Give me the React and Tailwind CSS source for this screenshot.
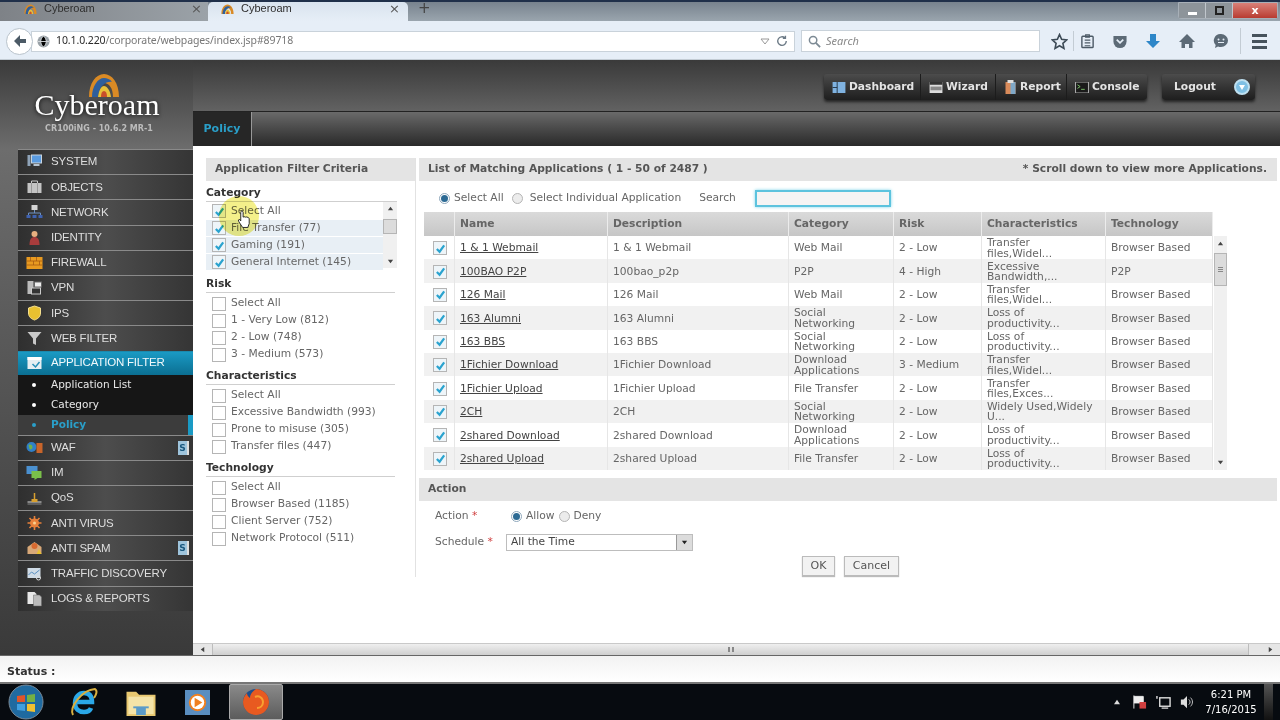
import React from "react";

const UI = "font-['DejaVu_Sans',sans-serif]";
const ARIAL = "font-['Liberation_Sans',Arial,sans-serif]";

function Arch({ className }) {
  return (
    <svg viewBox="0 0 32 24" className={className}>
      <path d="M1 24C1 10 8 1 16 1s15 9 15 23h-6C25 15 21 10 16 10S7 15 7 24Z" fill="#d98a25" />
      <path d="M4 24C4 13 10 5 16 5c3 0 6 1 8 4-5-1-13 3-14 15Z" fill="#2f5f9c" />
      <path d="M10 24c1-7 3-11 6-11s6 4 7 11Z" fill="#e8c23a" />
      <path d="M13 24c0-4 1-6 3-6s3 2 3 6Z" fill="#c9502a" />
    </svg>
  );
}

const navIcons = {
  system: <g><rect x="1" y="1" width="3" height="11" fill="#8fa3b8" /><rect x="5" y="1" width="10" height="8" fill="#5a9be0" stroke="#c8d4e0" /><rect x="7" y="10" width="6" height="2" fill="#b8c4d0" /></g>,
  objects: <g><rect x="1" y="4" width="14" height="10" fill="#c4c4c4" /><path d="M5 4V2h6v2" stroke="#ccc" fill="none" /><path d="M5 4v10M11 4v10" stroke="#999" /></g>,
  network: <g><rect x="5" y="1" width="6" height="5" fill="#d4d4d4" /><path d="M8 6v3M2 12V9h12v3" stroke="#6d8fc0" fill="none" /><rect x="0" y="11" width="4" height="3" fill="#3f62b0" /><rect x="6" y="11" width="4" height="3" fill="#3f62b0" /><rect x="12" y="11" width="4" height="3" fill="#3f62b0" /></g>,
  identity: <g><circle cx="8" cy="4" r="3" fill="#e8b080" /><path d="M3 15c0-6 2-8 5-8s5 2 5 8Z" fill="#a83c3c" /></g>,
  firewall: <g><rect x="0" y="2" width="16" height="12" fill="#e89a20" /><path d="M0 6h16M0 10h16M4 2v4M10 2v4M7 6v4M13 6v4" stroke="#a85c10" strokeWidth=".8" /></g>,
  vpn: <g><rect x="1" y="1" width="6" height="13" fill="#bbb" /><rect x="8" y="2" width="7" height="5" fill="#eee" stroke="#666" /><rect x="5" y="8" width="9" height="6" fill="#333" stroke="#ccc" /></g>,
  ips: <path d="M8 1l6 2v5c0 4-3 6-6 7-3-1-6-3-6-7V3Z" fill="#e8c030" stroke="#f5e090" />,
  web: <path d="M1 2h14L9.5 8.5V15l-3-1.5v-5Z" fill="#c8c8c8" />,
  app: <g><rect x="1" y="2" width="14" height="12" fill="#e6eef2" /><rect x="1" y="2" width="14" height="3" fill="#fff" /><path d="M6 9l3 3 4-5" stroke="#2a8fb8" strokeWidth="1.5" fill="none" /></g>,
  waf: <g><circle cx="5" cy="7" r="5" fill="#2f7fc8" /><path d="M2 5c2-1 4 0 4 2s-2 3-3 2" fill="#6db04a" /><rect x="10" y="3" width="6" height="10" fill="#c8642a" /></g>,
  im: <g><rect x="0" y="1" width="11" height="8" fill="#4a90d0" /><rect x="5" y="6" width="10" height="7" fill="#7ac04a" /><path d="M8 13v2l3-2" fill="#7ac04a" /></g>,
  qos: <g><path d="M1 12h14" stroke="#ddd" strokeWidth="1" /><rect x="5" y="9" width="6" height="3" fill="#d8a030" /><path d="M8 3v6" stroke="#d8a030" strokeWidth="1.5" /><path d="M1 14h14" stroke="#888" /></g>,
  av: <g><circle cx="8" cy="8" r="4.5" fill="#e8803a" /><path d="M8 1v14M1 8h14M3 3l10 10M13 3L3 13" stroke="#e8803a" strokeWidth="1.6" /><circle cx="8" cy="8" r="1.5" fill="#f8d090" /></g>,
  as: <g><path d="M1 7l7-5 7 5v7H1Z" fill="#d8a878" /><circle cx="8" cy="6" r="3" fill="#d86a30" /><path d="M10 14l2.5-5 2.5 5Z" fill="#e8c030" /></g>,
  td: <g><rect x="1" y="2" width="13" height="10" fill="#cfdbe6" /><path d="M2 9l3-3 3 2 5-4" stroke="#5a8fc0" fill="none" /><circle cx="12" cy="12" r="2" fill="none" stroke="#ddd" /></g>,
  logs: <g><path d="M1 1h7l2 2v10H1Z" fill="#e8e8e8" /><path d="M7 4h6l2 2v9H7Z" fill="#bbb" stroke="#666" strokeWidth=".5" /></g>,
};

function NavItem({ icon, label, active, badge, h = "h-[25.2px]" }) {
  return (
    <div className={`${h} flex items-center border-t ${active ? "border-[#1b89ad] bg-gradient-to-b from-[#1a9ac4] to-[#0b6f92]" : "border-[#8a8a8a] bg-gradient-to-r from-[#2f2f2f] via-[#4d4d4d] to-[#353535]"} pl-[8px] pr-[4px]`}>
      <svg viewBox="0 0 16 16" className="w-[17px] h-[16px] shrink-0">{navIcons[icon]}</svg>
      <span className={`ml-[8px] flex-1 text-[11.5px] tracking-[-0.2px] ${ARIAL} ${active ? "text-[#f0f8fb]" : "text-[#dedede]"}`}>{label}</span>
      {badge && <span className="w-[11px] h-[14px] bg-[#9ec4dc] text-[#1c5a80] border-r-2 border-[#ddd] text-[9px] leading-[14px] font-bold text-center">S</span>}
    </div>
  );
}

function SubItem({ label, active }) {
  return (
    <div className={`h-[20px] flex items-center pl-[14px] text-[10.5px] ${UI} ${active ? "bg-[#3c3c3c] border-r-[5px] border-[#1a9ac4] text-[#2a9fc9] font-bold" : "text-[#e8e8e8]"}`}>
      <span className={`w-[4px] h-[4px] rounded-full mr-[15px] ${active ? "bg-[#2a9fc9]" : "bg-white"}`} />
      {label}
    </div>
  );
}

function Check({ on }) {
  return (
    <span className={`w-[14px] h-[14px] shrink-0 border border-[#b5b5b5] flex items-center justify-center ${on ? "bg-[#eef5f9]" : "bg-white"}`}>
      {on && (
        <svg viewBox="0 0 12 12" className="w-[11px] h-[11px]"><path d="M2 6.5l3 3 5-7" stroke="#2aa3cf" strokeWidth="2.4" fill="none" /></svg>
      )}
    </span>
  );
}

function Radio({ on }) {
  return (
    <span className={`w-[11px] h-[11px] rounded-full border shrink-0 flex items-center justify-center ${on ? "border-[#8fa8bc] bg-white" : "border-[#b5b5b5] bg-[#ececec]"}`}>
      {on && <span className="w-[7px] h-[7px] rounded-full bg-[#2c6a94]" />}
    </span>
  );
}

function FilterGroup({ title, items }) {
  return (
    <div>
      <div className={`h-[17px] text-[10.7px] font-bold text-[#333] leading-[17px] ${UI}`}>{title}</div>
      <div className="border-t border-[#cfcfcf] w-[189px] pt-[2px] mb-[4px]">
        {items.map((t) => (
          <div key={t} className="h-[17px] flex items-center pl-[6px]">
            <Check />
            <span className={`ml-[5px] text-[10.7px] text-[#666] ${UI}`}>{t}</span>
          </div>
        ))}
      </div>
    </div>
  );
}

const rows = [
  ["1 & 1 Webmail", "1 & 1 Webmail", "Web Mail", "2 - Low", "Transfer files,Widel...", "Browser Based"],
  ["100BAO P2P", "100bao_p2p", "P2P", "4 - High", "Excessive Bandwidth,...", "P2P"],
  ["126 Mail", "126 Mail", "Web Mail", "2 - Low", "Transfer files,Widel...", "Browser Based"],
  ["163 Alumni", "163 Alumni", "Social Networking", "2 - Low", "Loss of productivity...", "Browser Based"],
  ["163 BBS", "163 BBS", "Social Networking", "2 - Low", "Loss of productivity...", "Browser Based"],
  ["1Fichier Download", "1Fichier Download", "Download Applications", "3 - Medium", "Transfer files,Widel...", "Browser Based"],
  ["1Fichier Upload", "1Fichier Upload", "File Transfer", "2 - Low", "Transfer files,Exces...", "Browser Based"],
  ["2CH", "2CH", "Social Networking", "2 - Low", "Widely Used,Widely U...", "Browser Based"],
  ["2shared Download", "2shared Download", "Download Applications", "2 - Low", "Loss of productivity...", "Browser Based"],
  ["2shared Upload", "2shared Upload", "File Transfer", "2 - Low", "Loss of productivity...", "Browser Based"],
];

const colW = ["w-[31px]", "w-[153px]", "w-[181px]", "w-[105px]", "w-[88px]", "w-[124px]", "w-[107px]"];

function ToolBtn({ icon, label, w, last }) {
  return (
    <div className={`${w} h-full flex items-center gap-[3px] pl-[8px] ${last ? "" : "border-r border-[#1c1c1c]"}`}>
      {icon}
      <span className={`text-[10.7px] font-bold text-[#e4e4e4] ${UI}`}>{label}</span>
    </div>
  );
}

function ScrollArrow({ d }) {
  return <svg viewBox="0 0 8 8" className="w-[7px] h-[7px]"><path d={d} fill="#444" /></svg>;
}

export default function App() {
  return (
    <div className={`relative w-[1280px] h-[720px] overflow-hidden flex flex-col bg-white ${UI}`}>
      {/* tab strip */}
      <div className="h-[21px] shrink-0 flex items-end bg-gradient-to-b from-[#78838e] to-[#9aa5ae] border-t-2 border-[#20304a] relative">
        <div className="w-[208px] h-[19px] bg-gradient-to-r from-[#7e8287] to-[#9ba2a8] flex items-center pl-[24px] pb-[6px]">
          <Arch className="w-[13px] h-[10px]" />
          <span className={`ml-[7px] text-[11px] text-[#2e2e2e] ${ARIAL}`}>Cyberoam</span>
          <span className="ml-auto mr-[6px] text-[13px] leading-none text-[#555]">×</span>
        </div>
        <div className="w-[200px] h-[19px] bg-gradient-to-b from-[#d9e3ee] to-[#e6eef7] rounded-t-[5px] flex items-center pl-[13px] pb-[6px]">
          <Arch className="w-[13px] h-[10px]" />
          <span className={`ml-[7px] text-[11px] text-[#2e2e2e] ${ARIAL}`}>Cyberoam</span>
          <span className="ml-auto mr-[8px] text-[13px] leading-none text-[#555]">×</span>
        </div>
        <span className="ml-[10px] h-[19px] text-[15px] leading-[13px] text-[#444]">+</span>
        <div className="ml-auto flex h-[17px] w-[100px] mr-[2px] self-start border border-[#a8b0b8] rounded-b-[3px]">
          <div className="flex-1 bg-[#8d949a] border-r border-[#c0c6cc] flex items-end justify-center pb-[3px]"><span className="w-[9px] h-[3px] bg-white" /></div>
          <div className="flex-1 bg-[#8d949a] border-r border-[#c0c6cc] flex items-center justify-center"><span className="w-[9px] h-[9px] border-2 border-[#222]" /></div>
          <div className="w-[44px] bg-gradient-to-b from-[#d88078] to-[#b83a30] text-white font-bold text-[11px] leading-[15px] text-center">x</div>
        </div>
      </div>
      {/* toolbar */}
      <div className="h-[39px] shrink-0 flex items-center bg-[#e6eef7] border-b border-[#c3ccd4] pl-[6px] pt-[2px]">
        <div className="w-[27px] h-[27px] rounded-full bg-white border border-[#b9c3cc] flex items-center justify-center z-10">
          <svg viewBox="0 0 16 16" className="w-[16px] h-[16px]"><path d="M8 2L2 8l6 6V10h6V6H8Z" fill="#4c5a66" /></svg>
        </div>
        <div className="-ml-[2px] w-[764px] h-[21px] bg-white border border-[#c9d2da] flex items-center pl-[5px] pr-[6px]">
          <svg viewBox="0 0 14 14" className="w-[13px] h-[13px]"><circle cx="7" cy="7" r="6.5" fill="#9aa2a8" /><path d="M1 7h12M7 1c-4 4-4 8 0 12M7 1c4 4 4 8 0 12" stroke="#d5d9dc" /></svg>
          <span className="ml-[6px] text-[10.5px] tracking-[-0.1px] text-[#2b2b2b] font-['Noto_Sans',sans-serif]">10.1.0.220<span className="text-[#777]">/corporate/webpages/index.jsp#89718</span></span>
          <svg viewBox="0 0 10 10" className="ml-auto w-[10px] h-[10px]"><path d="M1 3h8L5 8Z" fill="none" stroke="#999" /></svg>
          <svg viewBox="0 0 14 14" className="ml-[6px] w-[12px] h-[12px]"><path d="M12 7a5 5 0 1 1-1.5-3.5M11 1v3H8" stroke="#6c7a86" strokeWidth="1.6" fill="none" /></svg>
        </div>
        <div className="ml-[6px] w-[239px] h-[22px] bg-white border border-[#c9d2da] flex items-center pl-[6px]">
          <svg viewBox="0 0 14 14" className="w-[13px] h-[13px]"><circle cx="5.5" cy="5.5" r="4" stroke="#7d8a94" strokeWidth="1.6" fill="none" /><path d="M8.5 8.5L13 13" stroke="#7d8a94" strokeWidth="2" /></svg>
          <span className="ml-[5px] text-[11px] italic text-[#888] font-['Noto_Sans',sans-serif]">Search</span>
        </div>
        <svg viewBox="0 0 16 16" className="ml-[11px] w-[17px] h-[17px]"><path d="M8 1.5l2 4.5 4.8.5-3.6 3.2 1 4.8L8 12l-4.200 2.500 1-4.800L1.200 6.500 6 6Z" fill="none" stroke="#3c4a56" strokeWidth="1.500" /></svg>
        <span className="w-px h-[20px] bg-[#c3ccd4] ml-[5px]" />
        <svg viewBox="0 0 16 16" className="ml-[6px] w-[15px] h-[16px]"><rect x="2" y="3" width="12" height="12" rx="1" fill="none" stroke="#4c5a66" strokeWidth="1.500" /><path d="M6 1.500h4V4H6ZM5 7h6M5 10h6M5 13h6" stroke="#4c5a66" strokeWidth="1.200" fill="none" /></svg>
        <svg viewBox="0 0 16 16" className="ml-[17px] w-[16px] h-[15px]"><path d="M1 2h14v6a7 7 0 0 1-14 0Z" fill="#5c6a76" /><path d="M4.500 6L8 9.500 11.500 6" stroke="#e6eef7" strokeWidth="1.800" fill="none" /></svg>
        <svg viewBox="0 0 16 16" className="ml-[17px] w-[16px] h-[16px]"><path d="M5 1h6v7h4l-7 7-7-7h4Z" fill="#2d86c8" /></svg>
        <svg viewBox="0 0 16 16" className="ml-[18px] w-[16px] h-[16px]"><path d="M8 1L0 9h2.500v6H6v-4h4v4h3.500V9H16Z" fill="#5c6a76" /></svg>
        <svg viewBox="0 0 16 16" className="ml-[18px] w-[16px] h-[16px]"><path d="M8 1a7 6.500 0 0 1 0 13c-1 0-2-.2-3-.6L2 15l.7-3A6.500 6.500 0 0 1 8 1Z" fill="#5c6a76" /><circle cx="5.500" cy="6.500" r="1" fill="#e6eef7" /><circle cx="10.500" cy="6.500" r="1" fill="#e6eef7" /><path d="M5 9.500h6" stroke="#e6eef7" /></svg>
        <span className="w-px h-[26px] bg-[#c3ccd4] ml-[11px]" />
        <div className="ml-[11px] w-[15px] flex flex-col gap-[3px]">
          <span className="h-[3px] bg-[#46525c]" />
          <span className="h-[3px] bg-[#46525c]" />
          <span className="h-[3px] bg-[#46525c]" />
        </div>
      </div>

      {/* app */}
      <div className="h-[595px] shrink-0 flex">
        {/* left column */}
        <div className="w-[193px] shrink-0 flex flex-col bg-gradient-to-b from-[#3b3b3b] via-[#6d6d6d] via-[15%] to-[#3a3a3a]">
          <div className="h-[89px] shrink-0 flex flex-col items-center pl-[1px]">
            <Arch className="w-[32px] h-[24px] mt-[13px] ml-[14px]" />
            <span className="-mt-[7px] text-[30px] leading-[30px] text-white font-['Liberation_Serif',serif] drop-shadow-[0_1px_2px_rgba(0,0,0,0.8)]">Cyberoam</span>
            <span className={`mt-[3px] ml-[4px] text-[8px] font-bold text-[#bcbcbc] ${UI}`}>CR100iNG - 10.6.2 MR-1</span>
          </div>
          <div className="ml-[18px] flex flex-col">
            <NavItem icon="system" label="SYSTEM" />
            <NavItem icon="objects" label="OBJECTS" />
            <NavItem icon="network" label="NETWORK" />
            <NavItem icon="identity" label="IDENTITY" />
            <NavItem icon="firewall" label="FIREWALL" />
            <NavItem icon="vpn" label="VPN" />
            <NavItem icon="ips" label="IPS" />
            <NavItem icon="web" label="WEB FILTER" />
            <NavItem icon="app" label="APPLICATION FILTER" active h="h-[24px]" />
            <div className="bg-[#161616] flex flex-col">
              <SubItem label="Application List" />
              <SubItem label="Category" />
              <SubItem label="Policy" active />
            </div>
            <NavItem icon="waf" label="WAF" badge />
            <NavItem icon="im" label="IM" />
            <NavItem icon="qos" label="QoS" />
            <NavItem icon="av" label="ANTI VIRUS" />
            <NavItem icon="as" label="ANTI SPAM" badge />
            <NavItem icon="td" label="TRAFFIC DISCOVERY" />
            <NavItem icon="logs" label="LOGS & REPORTS" />
          </div>
        </div>

        {/* right column */}
        <div className="flex-1 min-w-0 flex flex-col">
          <div className="h-[51px] shrink-0 bg-gradient-to-b from-[#3a3a3a] to-[#626262] flex items-start justify-end pt-[14px] pr-[25px]">
            <div className="h-[26px] flex items-center rounded-[3px] bg-gradient-to-b from-[#4c4c4c] to-[#1e1e1e] shadow-[0_2px_3px_rgba(0,0,0,0.6)]">
              <ToolBtn w="w-[97px]" label="Dashboard" icon={<svg viewBox="0 0 14 12" className="w-[14px] h-[11px]"><rect width="14" height="12" fill="#7fb2e0" /><path d="M5 0v12M0 6h5" stroke="#234" /></svg>} />
              <ToolBtn w="w-[75px]" label="Wizard" icon={<svg viewBox="0 0 14 12" className="w-[14px] h-[11px]"><rect width="14" height="12" fill="#ddd" /><rect y="0" width="14" height="3" fill="#333" /><rect x="1" y="5" width="12" height="4" fill="#888" /></svg>} />
              <ToolBtn w="w-[71px]" label="Report" icon={<svg viewBox="0 0 12 14" className="w-[13px] h-[14px]"><rect x="1" y="2" width="10" height="12" fill="#d88a5a" /><rect x="6" y="2" width="5" height="12" fill="#7fa8c8" /><path d="M3 0h6v3H3Z" fill="#ddd" /></svg>} />
              <ToolBtn w="w-[80px]" label="Console" last icon={<svg viewBox="0 0 14 12" className="w-[14px] h-[11px]"><rect width="14" height="12" fill="#1a1a1a" stroke="#bbb" /><path d="M2 3l3 2-3 2M6 8h4" stroke="#7ec86a" fill="none" /></svg>} />
            </div>
            <div className="ml-[15px] w-[93px] h-[26px] flex items-center rounded-[3px] bg-gradient-to-b from-[#4c4c4c] to-[#1e1e1e] shadow-[0_2px_3px_rgba(0,0,0,0.6)]">
              <span className={`w-[66px] text-center text-[10.7px] font-bold text-[#e4e4e4] ${UI}`}>Logout</span>
              <span className="ml-auto mr-[5px] w-[16px] h-[16px] rounded-full bg-[#7fc0e4] border-2 border-[#bfe0f0] flex items-center justify-center">
                <svg viewBox="0 0 8 8" className="w-[8px] h-[8px]"><path d="M1 2h6L4 7Z" fill="#fff" /></svg>
              </span>
            </div>
          </div>
          <div className="h-[35px] shrink-0 flex bg-gradient-to-b from-[#6a6a6a] to-[#2a2a2a] border-t border-[#222]">
            <div className="w-[59px] bg-[#262626] border-r border-[#999] flex items-center justify-center">
              <span className={`text-[11px] font-bold text-[#2a9fc9] ${UI}`}>Policy</span>
            </div>
          </div>

          {/* content */}
          <div className="h-[497px] shrink-0 bg-white flex pt-[12px] pl-[13px]">
            {/* filters */}
            <div className="w-[209px] h-[419px] shrink-0 border-r border-[#e2e2e2] box-content">
              <div className={`h-[23px] bg-[#e4e4e4] flex items-center pl-[9px] text-[10.7px] font-bold text-[#555] ${UI}`}>Application Filter Criteria</div>
              <div className="pt-[3px]">
                <div className={`h-[17px] text-[10.7px] font-bold text-[#333] leading-[17px] ${UI}`}>Category</div>
                <div className="border-t border-[#cfcfcf] w-[191px] h-[67px] flex mb-[7px] relative">
                  <div className="flex-1 flex flex-col pt-[1px]">
                    {[["Select All", false], ["File Transfer (77)", true], ["Gaming (191)", true], ["General Internet (145)", true]].map(([t, shade]) => (
                      <div key={t} className={`h-[16px] mb-[1px] flex items-center pl-[6px] ${shade ? "bg-[#e8eff5]" : ""}`}>
                        <Check on />
                        <span className={`ml-[5px] text-[10.7px] text-[#666] ${UI}`}>{t}</span>
                      </div>
                    ))}
                  </div>
                  <div className="w-[14px] bg-[#f0f0f0] flex flex-col items-center justify-between py-[3px] relative">
                    <ScrollArrow d="M4 2l3 4H1Z" />
                    <div className="absolute top-[17px] w-[14px] h-[15px] bg-[#dcdcdc] border border-[#b5b5b5]" />
                    <ScrollArrow d="M4 6L1 2h6Z" />
                  </div>
                </div>
                <FilterGroup title="Risk" items={["Select All", "1 - Very Low (812)", "2 - Low (748)", "3 - Medium (573)"]} />
                <FilterGroup title="Characteristics" items={["Select All", "Excessive Bandwidth (993)", "Prone to misuse (305)", "Transfer files (447)"]} />
                <FilterGroup title="Technology" items={["Select All", "Browser Based (1185)", "Client Server (752)", "Network Protocol (511)"]} />
              </div>
            </div>

            {/* apps */}
            <div className="ml-[3px] w-[858px] shrink-0 flex flex-col">
              <div className={`h-[23px] bg-[#e4e4e4] flex items-center justify-between pl-[9px] pr-[10px] text-[10.7px] font-bold text-[#555] ${UI}`}>
                <span>List of Matching Applications ( 1 - 50 of 2487 )</span>
                <span>* Scroll down to view more Applications.</span>
              </div>
              <div className={`h-[31px] pt-[4px] flex items-center pl-[20px] text-[10.7px] text-[#666] ${UI}`}>
                <Radio on />
                <span className="ml-[4px]">Select All</span>
                <span className="ml-[8px]"><Radio /></span>
                <span className="ml-[7px]">Select Individual Application</span>
                <span className="ml-[18px]">Search</span>
                <span className="ml-[19px] w-[136px] h-[17px] border-2 border-[#5cc3de] bg-[#f4f4f4] shadow-[0_0_3px_#7fd6ea]" />
              </div>
              {/* table head */}
              <div className="ml-[5px] w-[789px] h-[24px] flex bg-gradient-to-b from-[#dadada] to-[#c6c6c6]">
                {["", "Name", "Description", "Category", "Risk", "Characteristics", "Technology"].map((h, i) => (
                  <div key={h} className={`${colW[i]} shrink-0 h-full flex items-center pl-[5px] border-r border-[#ececec] text-[10.7px] font-bold text-[#666] ${UI}`}>{h}</div>
                ))}
              </div>
              <div className="flex">
                <div className="ml-[5px] w-[789px] shrink-0 flex flex-col">
                  {rows.map((r, idx) => (
                    <div key={r[0]} className={`h-[23.4px] flex items-center ${idx % 2 ? "bg-[#f1f1f1]" : "bg-white"}`}>
                      <div className={`${colW[0]} shrink-0 h-full border-r border-[#e6e6e6] flex items-center justify-center pt-[1px] pl-[2px]`}>
                        <Check on />
                      </div>
                      {r.map((c, i) => (
                        <div key={i} className={`${colW[i + 1]} shrink-0 h-full flex items-center pt-[2px] pl-[5px] ${i === 4 ? "pr-[10px]" : "pr-[6px]"} border-r border-[#e6e6e6] text-[10.7px] leading-[10.500px] text-[#666] ${UI}`}>
                          <span className={i === 0 ? "underline text-[#444]" : ""}>{c}</span>
                        </div>
                      ))}
                    </div>
                  ))}
                </div>
                <div className="w-[13px] ml-[1px] bg-[#f0f0f0] flex flex-col items-center justify-between py-[4px] relative">
                  <ScrollArrow d="M4 2l3 4H1Z" />
                  <div className="absolute top-[17px] w-[13px] h-[33px] bg-[#dcdcdc] border border-[#b5b5b5] flex flex-col items-center justify-center gap-[1px]">
                    <span className="w-[5px] h-px bg-[#888]" />
                    <span className="w-[5px] h-px bg-[#888]" />
                    <span className="w-[5px] h-px bg-[#888]" />
                  </div>
                  <ScrollArrow d="M4 6L1 2h6Z" />
                </div>
              </div>
              {/* action */}
              <div className={`mt-[8px] h-[23px] bg-[#e4e4e4] flex items-center pl-[9px] text-[10.7px] font-bold text-[#555] ${UI}`}>Action</div>
              <div className={`h-[31px] flex items-center pl-[16px] text-[10.7px] text-[#666] ${UI}`}>
                <span className="w-[76px]">Action <span className="text-[#d04040]">*</span></span>
                <Radio on />
                <span className="ml-[4px]">Allow</span>
                <span className="ml-[4px]"><Radio /></span>
                <span className="ml-[4px]">Deny</span>
              </div>
              <div className={`mt-[2px] h-[17px] flex items-center pl-[16px] text-[10.7px] text-[#666] ${UI}`}>
                <span className="w-[71px]">Schedule <span className="text-[#d04040]">*</span></span>
                <div className="w-[187px] h-[17px] border border-[#bdbdbd] flex items-center pl-[4px] text-[#444]">
                  All the Time
                  <span className="ml-auto w-[16px] h-full bg-[#dcdcdc] border-l border-[#999] flex items-center justify-center">
                    <svg viewBox="0 0 8 8" className="w-[7px] h-[7px]"><path d="M1 2h6L4 6Z" fill="#222" /></svg>
                  </span>
                </div>
              </div>
              <div className="mt-[5px] flex pl-[383px] gap-[9px]">
                <div className={`w-[33px] h-[20px] border border-[#bbb] bg-[#f2f2f2] shadow-[0_1px_1px_#bbb] flex items-center justify-center text-[11px] text-[#555] ${UI}`}>OK</div>
                <div className={`w-[55px] h-[20px] border border-[#bbb] bg-[#f2f2f2] shadow-[0_1px_1px_#bbb] flex items-center justify-center text-[11px] text-[#555] ${UI}`}>Cancel</div>
              </div>
            </div>
          </div>

          {/* horizontal scrollbar */}
          <div className="h-[12px] shrink-0 flex items-center bg-[#e6e6e6] border-t border-[#c9c9c9]">
            <div className="w-[19px] flex justify-center"><ScrollArrow d="M2 4l4-3v6Z" /></div>
            <div className="w-[1037px] h-full bg-gradient-to-b from-[#efefef] to-[#cfcfcf] border-x border-[#bdbdbd] flex items-center justify-center">
              <span className="w-[6px] h-[5px] border-x-2 border-[#888]" />
            </div>
            <div className="flex-1 flex justify-end pr-[6px]"><ScrollArrow d="M6 4L2 1v6Z" /></div>
          </div>
        </div>
      </div>

      {/* status */}
      <div className={`h-[27px] shrink-0 bg-gradient-to-b from-[#f2f2f2] to-white flex items-center pl-[7px] pt-[6px] text-[11px] font-bold text-[#333] border-t border-[#666] ${UI}`}>Status :</div>

      {/* taskbar */}
      <div className="h-[38px] shrink-0 bg-[#070b10] border-t-2 border-[#777] flex items-center pl-[8px]">
        <svg viewBox="0 0 36 36" className="w-[36px] h-[36px]"><circle cx="18" cy="18" r="17" fill="#1f6aa0" stroke="#7a8a98" /><path d="M9 12l8-1v7H9Z" fill="#e0552a" /><path d="M19 11l8-1v8h-8Z" fill="#74b044" /><path d="M9 20h8v7l-8-1Z" fill="#3f9fe0" /><path d="M19 20h8v8l-8-1Z" fill="#f0c030" /></svg>
        <svg viewBox="0 0 32 32" className="ml-[24px] w-[32px] h-[32px]"><path d="M9 16h15c0-6-3-9-8-9s-9 4-9 10 4 9 9 9c3 0 6-1 7-4" stroke="#2aa8e8" strokeWidth="4.500" fill="none" /><path d="M5 29C1 21 14 4 27 3c3 2 1 6-1 9" stroke="#d8b040" strokeWidth="2" fill="none" /></svg>
        <svg viewBox="0 0 32 30" className="ml-[25px] w-[32px] h-[29px]"><path d="M1 4h10l3 3h17v22H1Z" fill="#e8c870" /><rect x="3" y="9" width="26" height="18" fill="#f4e4a8" /><path d="M11 28v-8h10v8" fill="#5a9bc8" /><path d="M8 20h16" stroke="#5a9bc8" strokeWidth="2" /></svg>
        <svg viewBox="0 0 26 26" className="ml-[28px] w-[25px] h-[25px]"><rect width="26" height="26" fill="#5a8ec0" /><circle cx="13" cy="13" r="9" fill="#f08020" /><circle cx="13" cy="13" r="7" fill="#fff" /><path d="M10 8l8 5-8 5Z" fill="#f08020" /></svg>
        <div className="ml-[19px] w-[54px] h-[36px] bg-gradient-to-b from-[#8a8a8a] to-[#5c5c5c] border border-[#aaa] rounded-[2px] flex items-center justify-center">
          <svg viewBox="0 0 30 30" className="w-[30px] h-[30px]"><circle cx="15" cy="15" r="13" fill="#1f4f8c" /><path d="M15 2a13 13 0 1 1-13 13c0-4 2-7 4-9 0 3 2 4 3 5 0-4 3-7 6-9Z" fill="#e85a20" /><path d="M14 10c4-2 8 1 8 5s-3 6-6 6" stroke="#f8a030" strokeWidth="2" fill="none" /></svg>
        </div>
        <div className="ml-auto flex items-center pr-[7px]">
          <svg viewBox="0 0 10 8" className="w-[8px] h-[6px]"><path d="M5 1l4 6H1Z" fill="#ddd" /></svg>
          <svg viewBox="0 0 16 16" className="ml-[11px] w-[15px] h-[16px]"><path d="M2 1v14M2 2h10v7H2" fill="#eee" stroke="#eee" /><rect x="8" y="8" width="7" height="7" fill="#d04040" /></svg>
          <svg viewBox="0 0 16 16" className="ml-[9px] w-[15px] h-[15px]"><rect x="4" y="3" width="11" height="9" fill="none" stroke="#ddd" strokeWidth="1.500" /><path d="M1 1v3M6 14h7" stroke="#ddd" strokeWidth="1.500" /></svg>
          <svg viewBox="0 0 16 16" className="ml-[9px] w-[14px] h-[14px]"><path d="M1 5h3l4-4v14l-4-4H1Z" fill="#ddd" /><path d="M10 5c2 2 2 4 0 6M12 3c3 3 3 7 0 10" stroke="#ddd" fill="none" /></svg>
          <div className={`ml-[10px] w-[54px] flex flex-col items-center text-[10px] leading-[15px] text-white ${UI}`}>
            <span>6:21 PM</span>
            <span>7/16/2015</span>
          </div>
          <span className="ml-[6px] w-[9px] h-[36px] bg-gradient-to-b from-[#555] to-[#111]" />
        </div>
      </div>

      {/* cursor highlight over the category list */}
      <div className="absolute left-[219px] top-[196px] w-[40px] h-[40px] rounded-full bg-[#f4f08a] mix-blend-multiply pointer-events-none" />
      <svg viewBox="0 0 16 20" className="absolute left-[237px] top-[209px] w-[15px] h-[20px] pointer-events-none">
        <path d="M5 1.500c1 0 1.500.5 1.500 1.500v5l1-.5 1.500.5 1.500-.2 1.500.7 1 .8V15l-1.500 4H6l-4-6-.5-2 1.500-.5 1 1.500V3c0-1 .5-1.500 1-1.500Z" fill="#fff" stroke="#222" strokeWidth="1" />
      </svg>
    </div>
  );
}
